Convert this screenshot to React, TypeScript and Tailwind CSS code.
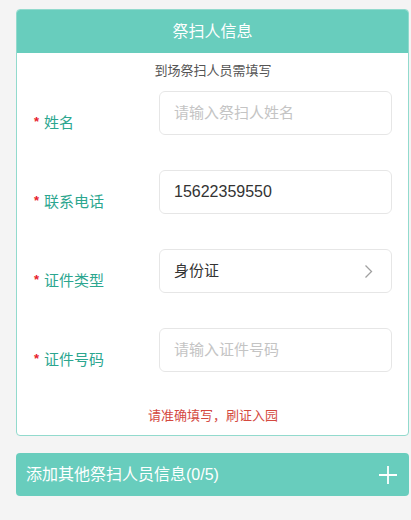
const font = { fontFamily: '"Liberation Sans", "Noto Sans CJK SC", sans-serif' }

type Field = {
	label: string
	value?: string
	placeholder?: string
	select?: boolean
	numeric?: boolean
}

const fields: Field[] = [
	{ label: '姓名', placeholder: '请输入祭扫人姓名' },
	{ label: '联系电话', value: '15622359550', numeric: true },
	{ label: '证件类型', value: '身份证', select: true },
	{ label: '证件号码', placeholder: '请输入证件号码' },
]

function FormRow({ field }: { field: Field }) {
	return (
		<div className="flex items-center">
			<div className="w-[125px] mt-[18px] flex items-center text-[15px] leading-[21px] text-[#2ca68f]">
				<span className="text-[#e8212b] text-[13px] font-bold leading-none mr-[5px] -mt-[2px]">*</span>
				<span>{field.label}</span>
			</div>
			<div className="flex-1 h-[44px] border border-[#e6e6e6] rounded-[6px] bg-white flex items-center pl-[14px] pr-[18px]">
				{field.value ? (
					<span className={`flex-1 text-[#333333] ${field.numeric ? 'text-[16px]' : 'text-[15px]'}`}>
						{field.value}
					</span>
				) : (
					<span className="flex-1 text-[15px] text-[#c4c4c4]">{field.placeholder}</span>
				)}
				{field.select && (
					<svg width="9" height="15" viewBox="0 0 9 15" fill="none">
						<path d="M1.5 1.5 L7.5 7.5 L1.5 13.5" stroke="#a0a0a0" strokeWidth="1.3" />
					</svg>
				)}
			</div>
		</div>
	)
}

export default function App() {
	return (
		<div className="min-h-[520px] bg-[#f4f4f4] pt-[9px] pl-[16px] pr-[2px]" style={font}>
			{/* Info card */}
			<div className="border border-[#92dacd] rounded-[4px] overflow-hidden bg-white">
				<div className="h-[43px] bg-[#68cdbd] flex items-center justify-center text-white text-[16px]">
					祭扫人信息
				</div>
				<div className="pt-[9px] pb-[10px] pl-[17px] pr-[16px]">
					<div className="text-center text-[13px] leading-[18px] text-[#555555]">
						到场祭扫人员需填写
					</div>
					<div className="mt-[11px] flex flex-col gap-[35px]">
						{fields.map((f) => (
							<FormRow key={f.label} field={f} />
						))}
					</div>
					<div className="mt-[35px] text-center text-[13px] leading-[18px] text-[#d4493f]">
						请准确填写，刷证入园
					</div>
				</div>
			</div>

			{/* Add more */}
			<div className="mt-[17px] h-[43px] rounded-[4px] bg-[#68cdbd] flex items-center pl-[10px] pr-[12px] text-white">
				<span className="flex-1 text-[16px]">添加其他祭扫人员信息(0/5)</span>
				<svg width="18" height="18" viewBox="0 0 18 18" fill="none">
					<path d="M9 0 V18 M0 9 H18" stroke="white" strokeWidth="1.8" />
				</svg>
			</div>
		</div>
	)
}
